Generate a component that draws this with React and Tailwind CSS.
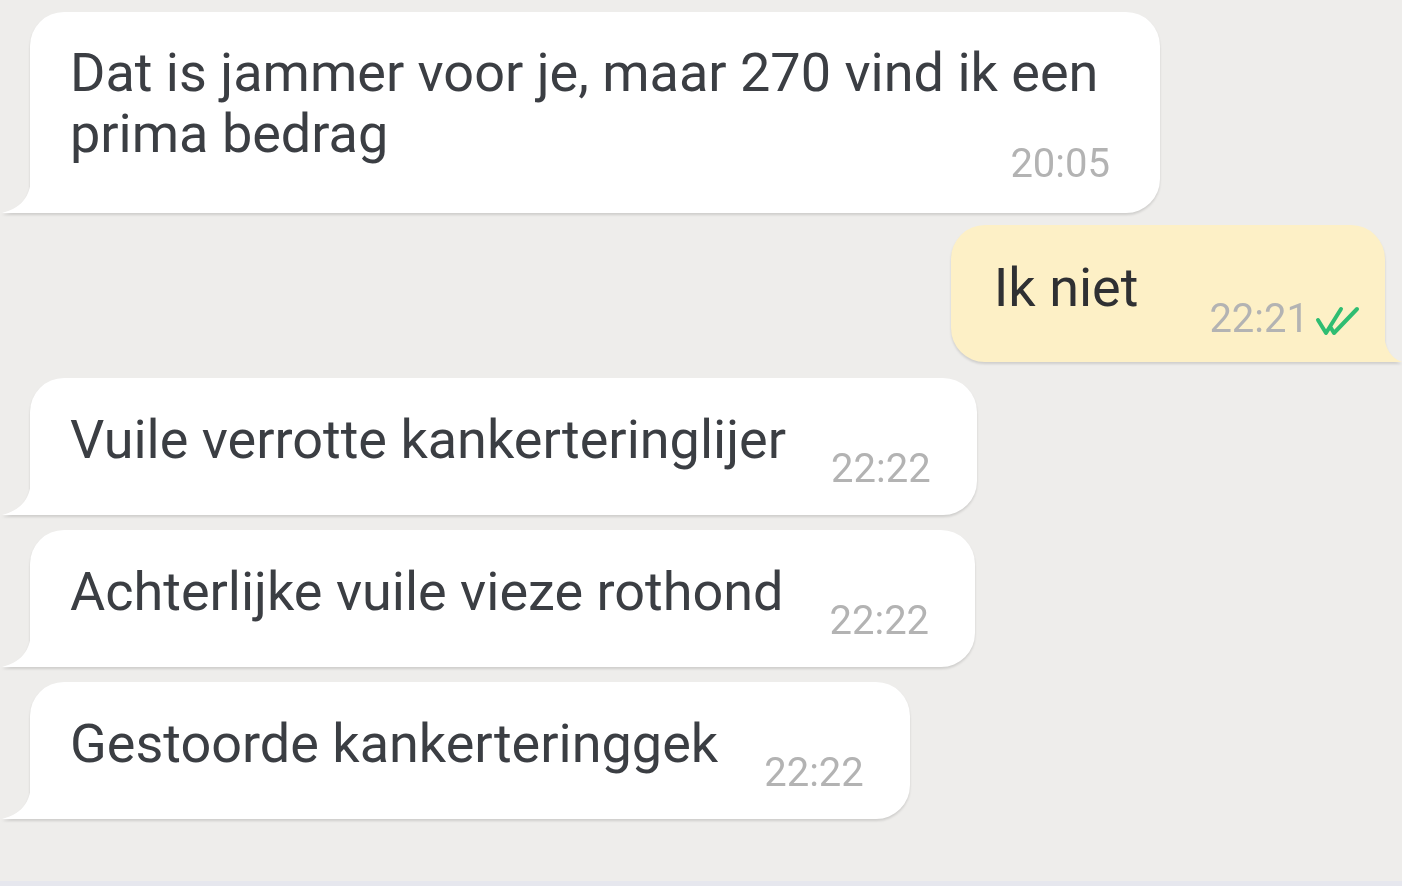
import React from "react";

function Time({ children }) {
  return (
    <span className="text-[40px] leading-[39px] text-[#b3b3b3] whitespace-nowrap" style={{ fontFamily: "Roboto, sans-serif" }}>
      {children}
    </span>
  );
}

function LeftTail() {
  return (
    <svg className="absolute left-[-28px] bottom-0" width="30" height="46" viewBox="0 0 30 46">
      <path d="M30 0 C30 28 22 40 0 46 L30 46 Z" fill="#ffffff" />
    </svg>
  );
}

function RightTail() {
  return (
    <svg className="absolute right-[-17px] bottom-0" width="19" height="46" viewBox="0 0 19 46">
      <path d="M0 0 C0 28 4 40 19 46 L0 46 Z" fill="#fdf0c6" />
    </svg>
  );
}

function Received({ text, time, gap }) {
  return (
    <div className="flex pl-[30px]">
      <div className="relative drop-shadow-[0_2px_1px_rgba(0,0,0,0.13)]">
        <LeftTail />
        <div className="flex items-end bg-white rounded-[34px] rounded-bl-none pl-[40px] pr-[46px] pt-[31px] pb-[26px]">
          <span className="text-[54px] leading-[61px] text-[#3b3e43] mb-[19px] whitespace-nowrap">{text}</span>
          <span style={{ marginLeft: gap }}>
            <Time>{time}</Time>
          </span>
        </div>
      </div>
    </div>
  );
}

export default function App() {
  return (
    <div
      className="w-[1402px] h-[886px] bg-[#eeedeb] flex flex-col overflow-hidden relative"
      style={{ fontFamily: "Roboto, 'Liberation Sans', sans-serif" }}
    >
      <div className="flex flex-col pt-[12px]">
        {/* Message 1 */}
        <div className="flex pl-[30px]">
          <div className="relative drop-shadow-[0_2px_1px_rgba(0,0,0,0.13)]">
            <LeftTail />
            <div className="flex flex-col w-[1130px] bg-white rounded-[34px] rounded-bl-none pl-[40px] pr-[50px] pt-[30px] pb-[30px]">
              <span className="text-[54px] leading-[61px] text-[#3b3e43] whitespace-nowrap">
                Dat is jammer voor je, maar 270 vind ik een
                <br />
                prima bedrag
              </span>
              <div className="flex justify-end mt-[-20px]">
                <Time>20:05</Time>
              </div>
            </div>
          </div>
        </div>

        {/* Message 2 (sent) */}
        <div className="flex justify-end pr-[17px] mt-[12px]">
          <div className="relative drop-shadow-[0_2px_1px_rgba(0,0,0,0.13)]">
            <RightTail />
            <div className="flex items-end bg-[#fdf0c6] rounded-[34px] rounded-br-none pl-[43px] pr-[24px] pt-[32px] pb-[24px]">
              <span className="text-[54px] leading-[61px] text-[#2f3033] mb-[20px] whitespace-nowrap">Ik niet</span>
              <span className="ml-[71px] flex items-end gap-[6px]">
                <Time>22:21</Time>
                <svg width="46" height="30" viewBox="0 0 46 30" className="mb-[2px]">
                  <path d="M3 14 L11 27 L26 3" fill="none" stroke="#2fbd72" strokeWidth="4" strokeLinejoin="round" strokeLinecap="round" />
                  <path d="M16 22 L19 27 L42 3" fill="none" stroke="#2fbd72" strokeWidth="4" strokeLinejoin="round" strokeLinecap="round" />
                </svg>
              </span>
            </div>
          </div>
        </div>

        <div className="mt-[16px] flex flex-col gap-[15px]">
          <Received text="Vuile verrotte kankerteringlijer" time="22:22" gap="45px" />
          <Received text="Achterlijke vuile vieze rothond" time="22:22" gap="46px" />
          <Received text="Gestoorde kankerteringgek" time="22:22" gap="46px" />
        </div>
      </div>
      <div className="absolute left-0 right-0 bottom-0 h-[5px] bg-[#e6e7ee]" />
    </div>
  );
}
